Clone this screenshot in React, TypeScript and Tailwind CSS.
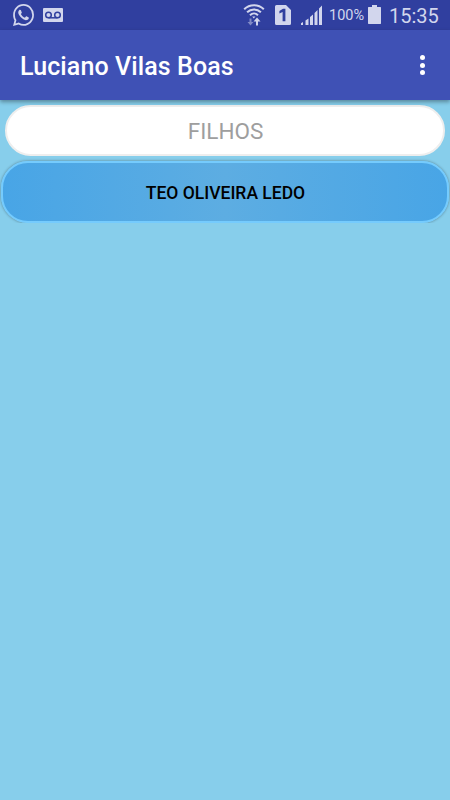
const WhatsAppIcon = () => (
  <svg width="21" height="22" viewBox="0 0 24 24" preserveAspectRatio="none" fill="currentColor">
    <path d="M17.472 14.382c-.297-.149-1.758-.867-2.03-.967-.273-.099-.471-.148-.67.15-.197.297-.767.966-.94 1.164-.173.199-.347.223-.644.075-.297-.15-1.255-.463-2.39-1.475-.883-.788-1.48-1.761-1.653-2.059-.173-.297-.018-.458.13-.606.134-.133.298-.347.446-.52.149-.174.198-.298.298-.497.099-.198.05-.371-.025-.52-.075-.149-.669-1.612-.916-2.207-.242-.579-.487-.5-.669-.51-.173-.008-.371-.01-.57-.01-.198 0-.52.074-.792.372-.272.297-1.04 1.016-1.04 2.479 0 1.462 1.065 2.875 1.213 3.074.149.198 2.096 3.2 5.077 4.487.709.306 1.262.489 1.694.625.712.227 1.36.195 1.871.118.571-.085 1.758-.719 2.006-1.413.248-.694.248-1.289.173-1.413-.074-.124-.272-.198-.57-.347m-5.421 7.403h-.004a9.87 9.87 0 01-5.031-1.378l-.361-.214-3.741.982.998-3.648-.235-.374a9.86 9.86 0 01-1.51-5.26c.001-5.45 4.436-9.884 9.888-9.884 2.64 0 5.122 1.03 6.988 2.898a9.825 9.825 0 012.893 6.994c-.003 5.45-4.437 9.884-9.885 9.884m8.413-18.297A11.815 11.815 0 0012.05 0C5.495 0 .16 5.335.157 11.892c0 2.096.547 4.142 1.588 5.945L.057 24l6.305-1.654a11.882 11.882 0 005.683 1.448h.005c6.554 0 11.89-5.335 11.893-11.893a11.821 11.821 0 00-3.48-8.413z" />
  </svg>
);

const VoicemailIcon = () => (
  <svg width="20" height="14" viewBox="0 0 20 14">
    <rect width="20" height="14" rx="1" fill="currentColor" />
    <g fill="none" stroke="#303f9f" strokeWidth="1.5">
      <circle cx="5.5" cy="7" r="2.8" />
      <circle cx="14.5" cy="7" r="2.8" />
      <path d="M5.5 9.8h9" />
    </g>
  </svg>
);

const WifiIcon = () => (
  <svg width="22" height="22" viewBox="0 0 22 22">
    <g fill="none" stroke="currentColor" strokeWidth="2">
      <path d="M1.2 5.200C6.600-.2 15.400-.2 20.800 5.200" />
      <path d="M4.100 8.300c3.900-3.800 9.900-3.800 13.800 0" />
      <path d="M7 11.200c2.300-2.200 5.700-2.200 8 0" />
    </g>
    <path d="M9.200 12.600h3.200L10.800 14.500z" fill="currentColor" />
    <path d="M6.500 14.500h2v3.500h2L7.500 21.500l-3-3.500h2z" fill="currentColor" opacity=".5" />
    <path d="M14 13.500l3.500 4h-2.500v4h-2v-4h-2.500z" fill="currentColor" />
  </svg>
);

const SimIcon = () => (
  <svg width="16" height="20" viewBox="0 0 16 20">
    <path d="M1.500 0H11l5 5v13.500a1.500 1.500 0 0 1-1.500 1.500h-13A1.500 1.500 0 0 1 0 18.500V1.500A1.500 1.500 0 0 1 1.500 0z" fill="currentColor" />
    <path d="M4.400 6 8 3.800h2.400V16.300H7.600V7L4.400 8.400z" fill="#303f9f" />
  </svg>
);

const SignalIcon = () => (
  <svg width="21" height="20" viewBox="0 0 21 20" fill="currentColor">
    <path d="M0 18.300 2 17v3H0zM4.500 15.500l3-2V20h-3zM9 12l3-2.500V20H9zM13.500 8l3-3v15h-3zM18 3.500l3-3V20h-3z" />
  </svg>
);

const BatteryIcon = () => (
  <svg width="13" height="19" viewBox="0 0 13 19" fill="currentColor">
    <path d="M4 0h5v2h3.500l.5.500v16l-.5.500H.5L0 18.500v-16L.5 2H4z" />
  </svg>
);

const StatusBar = () => (
  <div className="flex h-[30px] items-start bg-[#303f9f] text-[#d2d6ed]">
    <div className="ml-[13px] mt-1">
      <WhatsAppIcon />
    </div>
    <div className="ml-[9px] mt-2">
      <VoicemailIcon />
    </div>
    <div className="ml-auto mt-1">
      <WifiIcon />
    </div>
    <div className="ml-[10px] mt-[5px]">
      <SimIcon />
    </div>
    <div className="ml-[10px] mt-[5px]">
      <SignalIcon />
    </div>
    <span className="ml-[7px] mt-[6px] w-[36px] whitespace-nowrap text-[14.5px] leading-5">100%</span>
    <div className="ml-[3px] mt-[5px]">
      <BatteryIcon />
    </div>
    <span className="ml-[8px] mr-[11px] mt-[4px] w-[50px] whitespace-nowrap text-[20px] leading-6">15:35</span>
  </div>
);

const AppBar = () => (
  <header className="relative flex h-[70px] items-center justify-between bg-[#3f51b5] pl-5 pr-[25px] shadow-[0_2px_4px_rgba(0,0,0,0.35)]">
    <h1 className="pt-[3px] text-[25px] font-medium leading-8 tracking-[0.1px] text-white">Luciano Vilas Boas</h1>
    <button aria-label="Mais opções" className="flex flex-col gap-[2.5px]">
      <span className="size-[5px] rounded-full bg-white" />
      <span className="size-[5px] rounded-full bg-white" />
      <span className="size-[5px] rounded-full bg-white" />
    </button>
  </header>
);

export default function App() {
  return (
    <div className="flex h-[800px] w-[450px] flex-col overflow-hidden bg-[#87ceeb] font-['Roboto',sans-serif]">
      <StatusBar />
      <AppBar />
      <main className="flex flex-col pt-[5px]">
        <div className="mx-[5px] flex h-[51px] items-center justify-center rounded-[26px] border-2 border-[#eeeeee] bg-white pl-px pt-[2px] text-[22.5px] text-[#9e9e9e]">
          FILHOS
        </div>
        <div className="h-[67px] overflow-hidden px-px pt-[5px]">
          <button className="flex h-[62px] w-full items-center justify-center rounded-[27px] border-[2.5px] border-[#75cbfd] bg-[linear-gradient(90deg,#48a5e6,#5dade2_50%,#48a5e6)] bg-origin-border pl-px pt-[2px] text-[17.5px] font-medium text-black shadow-[0_0_3px_rgba(0,0,0,0.4)]">
            TEO OLIVEIRA LEDO
          </button>
        </div>
      </main>
    </div>
  );
}
